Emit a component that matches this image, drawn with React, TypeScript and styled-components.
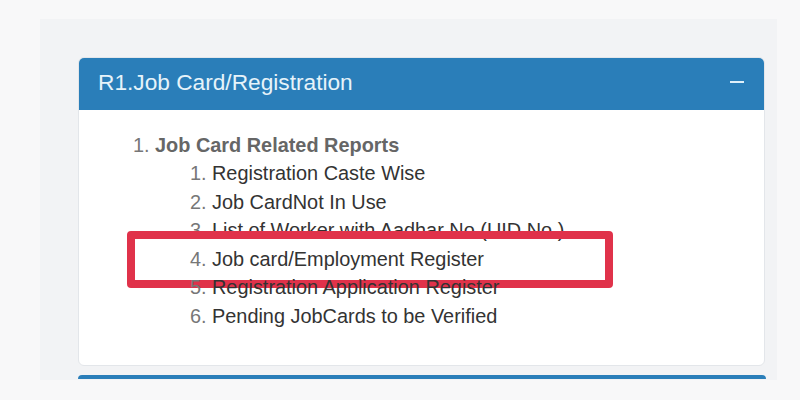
import React from "react";
import styled, { createGlobalStyle } from "styled-components";

const GlobalStyle = createGlobalStyle`
  html, body {
    margin: 0;
    padding: 0;
    background: #f8f8f9;
    font-family: "Liberation Sans", Arial, sans-serif;
  }
`;

const Page = styled.div`
  width: 800px;
  height: 400px;
  padding: 19px 0 0 40px;
  box-sizing: border-box;
  overflow: hidden;
`;

const Content = styled.div`
  width: 737px;
  height: 361px;
  max-height: 361px;
  box-sizing: border-box;
  padding: 38px 12px 0 38px;
  background: #f2f3f5;
  overflow: hidden;
  display: flex;
  flex-direction: column;
  gap: 9px;
`;

const Panel = styled.section`
  width: 687px;
  flex-shrink: 0;
  background: #ffffff;
  border: 1px solid #e3e6ea;
  border-radius: 6px;
  box-sizing: border-box;
  overflow: hidden;
`;

const PanelHeading = styled.header`
  height: 53px;
  box-sizing: border-box;
  margin: -1px -1px 0;
  padding: 0 21px 0 20px;
  background: #2a7eb9;
  border-radius: 6px 6px 0 0;
  display: flex;
  align-items: center;
  justify-content: space-between;
`;

const PanelTitle = styled.h3`
  margin: 0;
  font-size: 22.7px;
  font-weight: normal;
  line-height: 1.1;
  color: #e6f3fa;
  padding-bottom: 2px;
`;

const CollapseIcon = styled.span`
  display: block;
  width: 14px;
  height: 2px;
  background: #dff0fa;
  margin-top: -4px;
`;

const PanelBody = styled.div`
  padding: 21px 20px;
`;

const List = styled.ol<{ $nested?: boolean }>`
  margin: 0 0 ${(p) => (p.$nested ? "0" : "14px")};
  padding-left: ${(p) => (p.$nested ? "57px" : "56px")};
  font-size: 19.9px;
  line-height: 28.43px;
  color: #333333;

  & > li::marker {
    color: #777777;
    font-weight: normal;
  }
`;

const Item = styled.li`
  position: relative;
`;

const SectionTitle = styled.span`
  font-weight: bold;
  color: #666666;
`;

const Highlight = styled.span`
  position: absolute;
  left: -85px;
  top: -14px;
  width: 486px;
  height: 57px;
  box-sizing: border-box;
  border: 8px solid #e0324a;
  border-radius: 4px;
  pointer-events: none;
`;

const NextPanelHeading = styled.div`
  height: 4px;
  width: 688px;
  flex-shrink: 0;
  background: #2a7eb9;
  border-radius: 5px 5px 0 0;
`;

const reports = [
  "Registration Caste Wise",
  "Job CardNot In Use",
  "List of Worker with Aadhar No (UID No.)",
  "Job card/Employment Register",
  "Registration Application Register",
  "Pending JobCards to be Verified",
];

export default function App() {
  return (
    <>
      <GlobalStyle />
      <Page>
        <Content>
          <Panel>
            <PanelHeading>
              <PanelTitle>R1.Job Card/Registration</PanelTitle>
              <CollapseIcon />
            </PanelHeading>
            <PanelBody>
              <List>
                <Item>
                  <SectionTitle>Job Card Related Reports</SectionTitle>
                  <List $nested>
                    {reports.map((r, i) => (
                      <Item key={r}>
                        {r}
                        {i === 3 && <Highlight />}
                      </Item>
                    ))}
                  </List>
                </Item>
              </List>
            </PanelBody>
          </Panel>
          <NextPanelHeading />
        </Content>
      </Page>
    </>
  );
}
